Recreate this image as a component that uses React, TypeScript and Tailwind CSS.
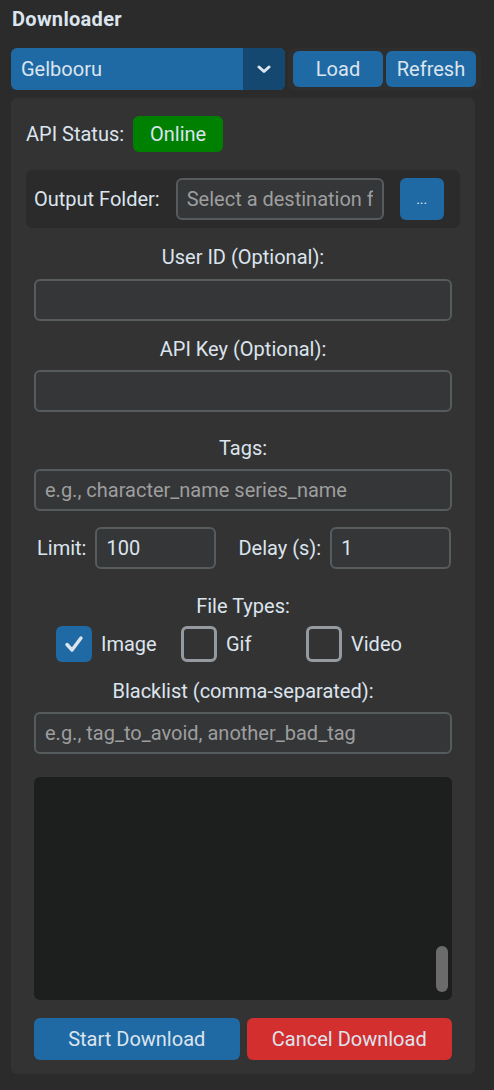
import React from "react";

const font = { fontFamily: "Roboto, 'Noto Sans', sans-serif" };

function Field({ placeholder, value, className = "" }: { placeholder?: string; value?: string; className?: string }) {
  return (
    <div
      className={`flex h-[42px] items-center rounded-md border-2 border-[#565b5e] bg-[#343638] px-[9px] text-[20px] overflow-hidden whitespace-nowrap ${className}`}
    >
      {value ? (
        <span className="text-[#dce4ee]">{value}</span>
      ) : (
        <span className="block min-w-0 overflow-hidden text-[#9e9e9e]">{placeholder}</span>
      )}
    </div>
  );
}

function Check({ label, checked, width }: { label: string; checked?: boolean; width: string }) {
  return (
    <div className={`flex items-center gap-[9px] ${width}`}>
      {checked ? (
        <div className="flex h-[36px] w-[36px] items-center justify-center rounded-md bg-[#1f6aa5]">
          <svg width="20" height="20" viewBox="0 0 20 20">
            <path d="M3 10.5 L8 16 L17 4" fill="none" stroke="#dce4ee" strokeWidth="3.4" strokeLinecap="round" strokeLinejoin="round" />
          </svg>
        </div>
      ) : (
        <div className="h-[36px] w-[36px] rounded-md border-[3px] border-[#949a9f]" />
      )}
      <span className="text-[20px] text-[#dce4ee]">{label}</span>
    </div>
  );
}

export default function App() {
  return (
    <div className="h-[1090px] w-[494px] bg-[#2b2b2b] text-[#dce4ee]" style={font}>
      <div className="px-[12px] pt-[6px] text-[20px] font-bold leading-[26px] tracking-[0.3px]">Downloader</div>

      {/* Site picker row */}
      <div className="mt-[16px] flex items-center pl-[11px]">
        <div className="flex h-[42px] w-[274px] overflow-hidden rounded-md bg-[#1f6aa5]">
          <div className="flex flex-1 items-center px-[10px] text-[20px]">Gelbooru</div>
          <div className="flex w-[42px] items-center justify-center bg-[#144870]">
            <svg width="14" height="10" viewBox="0 0 14 10">
              <path d="M2 3 L7 7.5 L12 3" fill="none" stroke="#dce4ee" strokeWidth="3" strokeLinecap="round" strokeLinejoin="round" />
            </svg>
          </div>
        </div>
        <div className="ml-[3px] flex h-[42px] items-center gap-[3px] rounded-md bg-[#2e2e2e] px-[5px]">
          <button className="h-[36px] w-[90px] rounded-md bg-[#1f6aa5] text-[20px] text-[#dce4ee]">Load</button>
          <button className="h-[36px] w-[90px] rounded-md bg-[#1f6aa5] text-[20px] text-[#dce4ee]">Refresh</button>
        </div>
      </div>

      {/* Main panel */}
      <div className="ml-[11px] mt-[8px] flex h-[976px] w-[464px] flex-col rounded-md bg-[#333333] px-[15px] pt-[18px]">
        <div className="flex items-center gap-[9px]">
          <span className="text-[20px]">API Status:</span>
          <div className="flex h-[36px] w-[90px] items-center justify-center rounded-md bg-[#008000] text-[20px]">Online</div>
        </div>

        <div className="mt-[18px] flex h-[58px] items-center rounded-md bg-[#2b2b2b] pl-[8px]">
          <span className="text-[20px]">Output Folder:</span>
          <Field placeholder="Select a destination folder" className="ml-[16px] w-[208px]" />
          <button className="ml-[16px] h-[42px] w-[44px] rounded-md bg-[#1f6aa5] text-[14px] leading-none text-[#dce4ee]">...</button>
        </div>

        <div className="flex flex-col px-[8px]">
          <div className="mt-[17px] text-center text-[20px] leading-[24px]">User ID (Optional):</div>
          <Field className="mt-[10px]" />
          <div className="mt-[16px] text-center text-[20px] leading-[24px]">API Key (Optional):</div>
          <Field className="mt-[9px]" />
          <div className="mt-[24px] text-center text-[20px] leading-[24px]">Tags:</div>
          <Field className="mt-[9px]" placeholder="e.g., character_name series_name" />

          <div className="mt-[16px] flex items-center">
            <span className="ml-[3px] text-[20px]">Limit:</span>
            <Field value="100" className="ml-[9px] w-[121px]" />
            <span className="ml-[22px] text-[20px]">Delay (s):</span>
            <Field value="1" className="ml-[9px] w-[121px]" />
          </div>

          <div className="mt-[25px] text-center text-[20px] leading-[24px]">File Types:</div>
          <div className="mt-[8px] flex items-center pl-[22px]">
            <Check label="Image" checked width="w-[125px]" />
            <Check label="Gif" width="w-[125px]" />
            <Check label="Video" width="w-[125px]" />
          </div>
          <div className="mt-[17px] text-center text-[20px] leading-[24px]">Blacklist (comma-separated):</div>
          <Field className="mt-[9px]" placeholder="e.g., tag_to_avoid, another_bad_tag" />

          <div className="relative mt-[23px] h-[223px] rounded-md bg-[#1d1e1e]">
            <div className="absolute bottom-[8px] right-[4px] h-[46px] w-[12px] rounded-full bg-[#6b6b6b]" />
          </div>

          <div className="mt-[18px] flex gap-[7px]">
            <button className="h-[42px] flex-1 rounded-md bg-[#1f6aa5] text-[20px] text-[#dce4ee]">Start Download</button>
            <button className="h-[42px] flex-1 rounded-md bg-[#d32f2f] text-[20px] text-[#dce4ee]">Cancel Download</button>
          </div>
        </div>
      </div>
    </div>
  );
}
